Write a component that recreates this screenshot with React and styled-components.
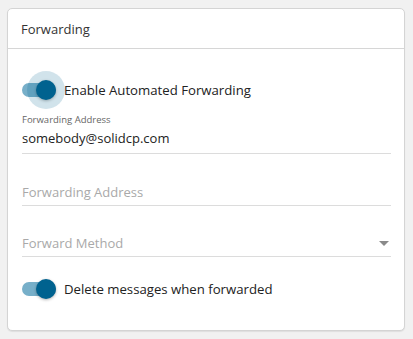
import React from 'react'
import styled, { createGlobalStyle } from 'styled-components'

const Global = createGlobalStyle`
    body{
        margin:0;
        background:#f1f1f1;
        font-family:"Open Sans", "Noto Sans", sans-serif;
        color:#212121;
    }
`

const Toggle = ({checked, focused}) => (
    <Switch>
        <Track checked={checked} />
        <Thumb checked={checked}>
            {focused && <Halo />}
        </Thumb>
    </Switch>
)

const App = () => {
    return (
        <Page>
            <Global />
            <Card>
                <Header>Forwarding</Header>
                <Body>
                    <ToggleRow>
                        <Toggle checked focused />
                        <ToggleLabel>Enable Automated Forwarding</ToggleLabel>
                    </ToggleRow>
                    <Field first>
                        <SmallLabel>Forwarding Address</SmallLabel>
                        <Value>somebody@solidcp.com</Value>
                    </Field>
                    <Field>
                        <Placeholder>Forwarding Address</Placeholder>
                    </Field>
                    <Field gap="13px">
                        <Placeholder>Forward Method</Placeholder>
                        <Arrow />
                    </Field>
                    <ToggleRow second>
                        <Toggle checked />
                        <ToggleLabel>Delete messages when forwarded</ToggleLabel>
                    </ToggleRow>
                </Body>
            </Card>
        </Page>
    )
}

export default App

const Page = styled.div`
    padding:8px 8px 8px 7px;
`
const Card = styled.div`
    width:398px;
    height:323px;
    box-sizing:border-box;
    background:#fff;
    border:1px solid #d4d4d4;
    border-radius:5px;
    box-shadow:0 1px 1px rgba(0,0,0,0.08);
`
const Header = styled.div`
    height:40px;
    box-sizing:border-box;
    padding:0 13px;
    display:flex;
    align-items:center;
    font-size:13px;
    color:#333;
    border-bottom:1px solid #d6d6d6;
`
const Body = styled.div`
    padding:23px 13px 0 14px;
    display:flex;
    flex-direction:column;
`
const ToggleRow = styled.div`
    display:flex;
    align-items:center;
    height:36px;
    margin-top:${p => p.second ? '14px' : '0'};
`
const Switch = styled.div`
    position:relative;
    width:34px;
    height:20px;
    margin-right:8px;
    flex-shrink:0;
`
const Track = styled.div`
    position:absolute;
    left:0;
    top:3px;
    width:34px;
    height:14px;
    border-radius:7px;
    background:${p => p.checked ? '#77afc9' : '#bbb'};
`
const Thumb = styled.div`
    position:absolute;
    top:0;
    left:${p => p.checked ? '14px' : '0'};
    width:20px;
    height:20px;
    border-radius:50%;
    background:${p => p.checked ? '#00628f' : '#fafafa'};
    box-shadow:0 1px 3px rgba(0,0,0,0.3);
`
const Halo = styled.div`
    position:absolute;
    left:-9px;
    top:-9px;
    width:38px;
    height:38px;
    border-radius:50%;
    background:rgba(0,98,143,0.18);
`
const ToggleLabel = styled.span`
    font-size:13.2px;
    color:#222;
`
const Field = styled.div`
    position:relative;
    height:38px;
    margin-top:${p => p.first ? '8px' : (p.gap || '14px')};
    border-bottom:1px solid #dcdcdc;
    display:flex;
    flex-direction:column;
    justify-content:flex-end;
    padding-bottom:${p => p.first ? '6px' : '4px'};
    box-sizing:border-box;
`
const SmallLabel = styled.span`
    font-size:9.5px;
    color:#666;
    margin-bottom:3px;
`
const Value = styled.span`
    font-size:13px;
    color:#222;
`
const Placeholder = styled.span`
    font-size:13px;
    color:#a9a9a9;
`
const Arrow = styled.div`
    position:absolute;
    right:2px;
    bottom:10px;
    width:0;
    height:0;
    border-left:5px solid transparent;
    border-right:5px solid transparent;
    border-top:5px solid #8a8a8a;
`
